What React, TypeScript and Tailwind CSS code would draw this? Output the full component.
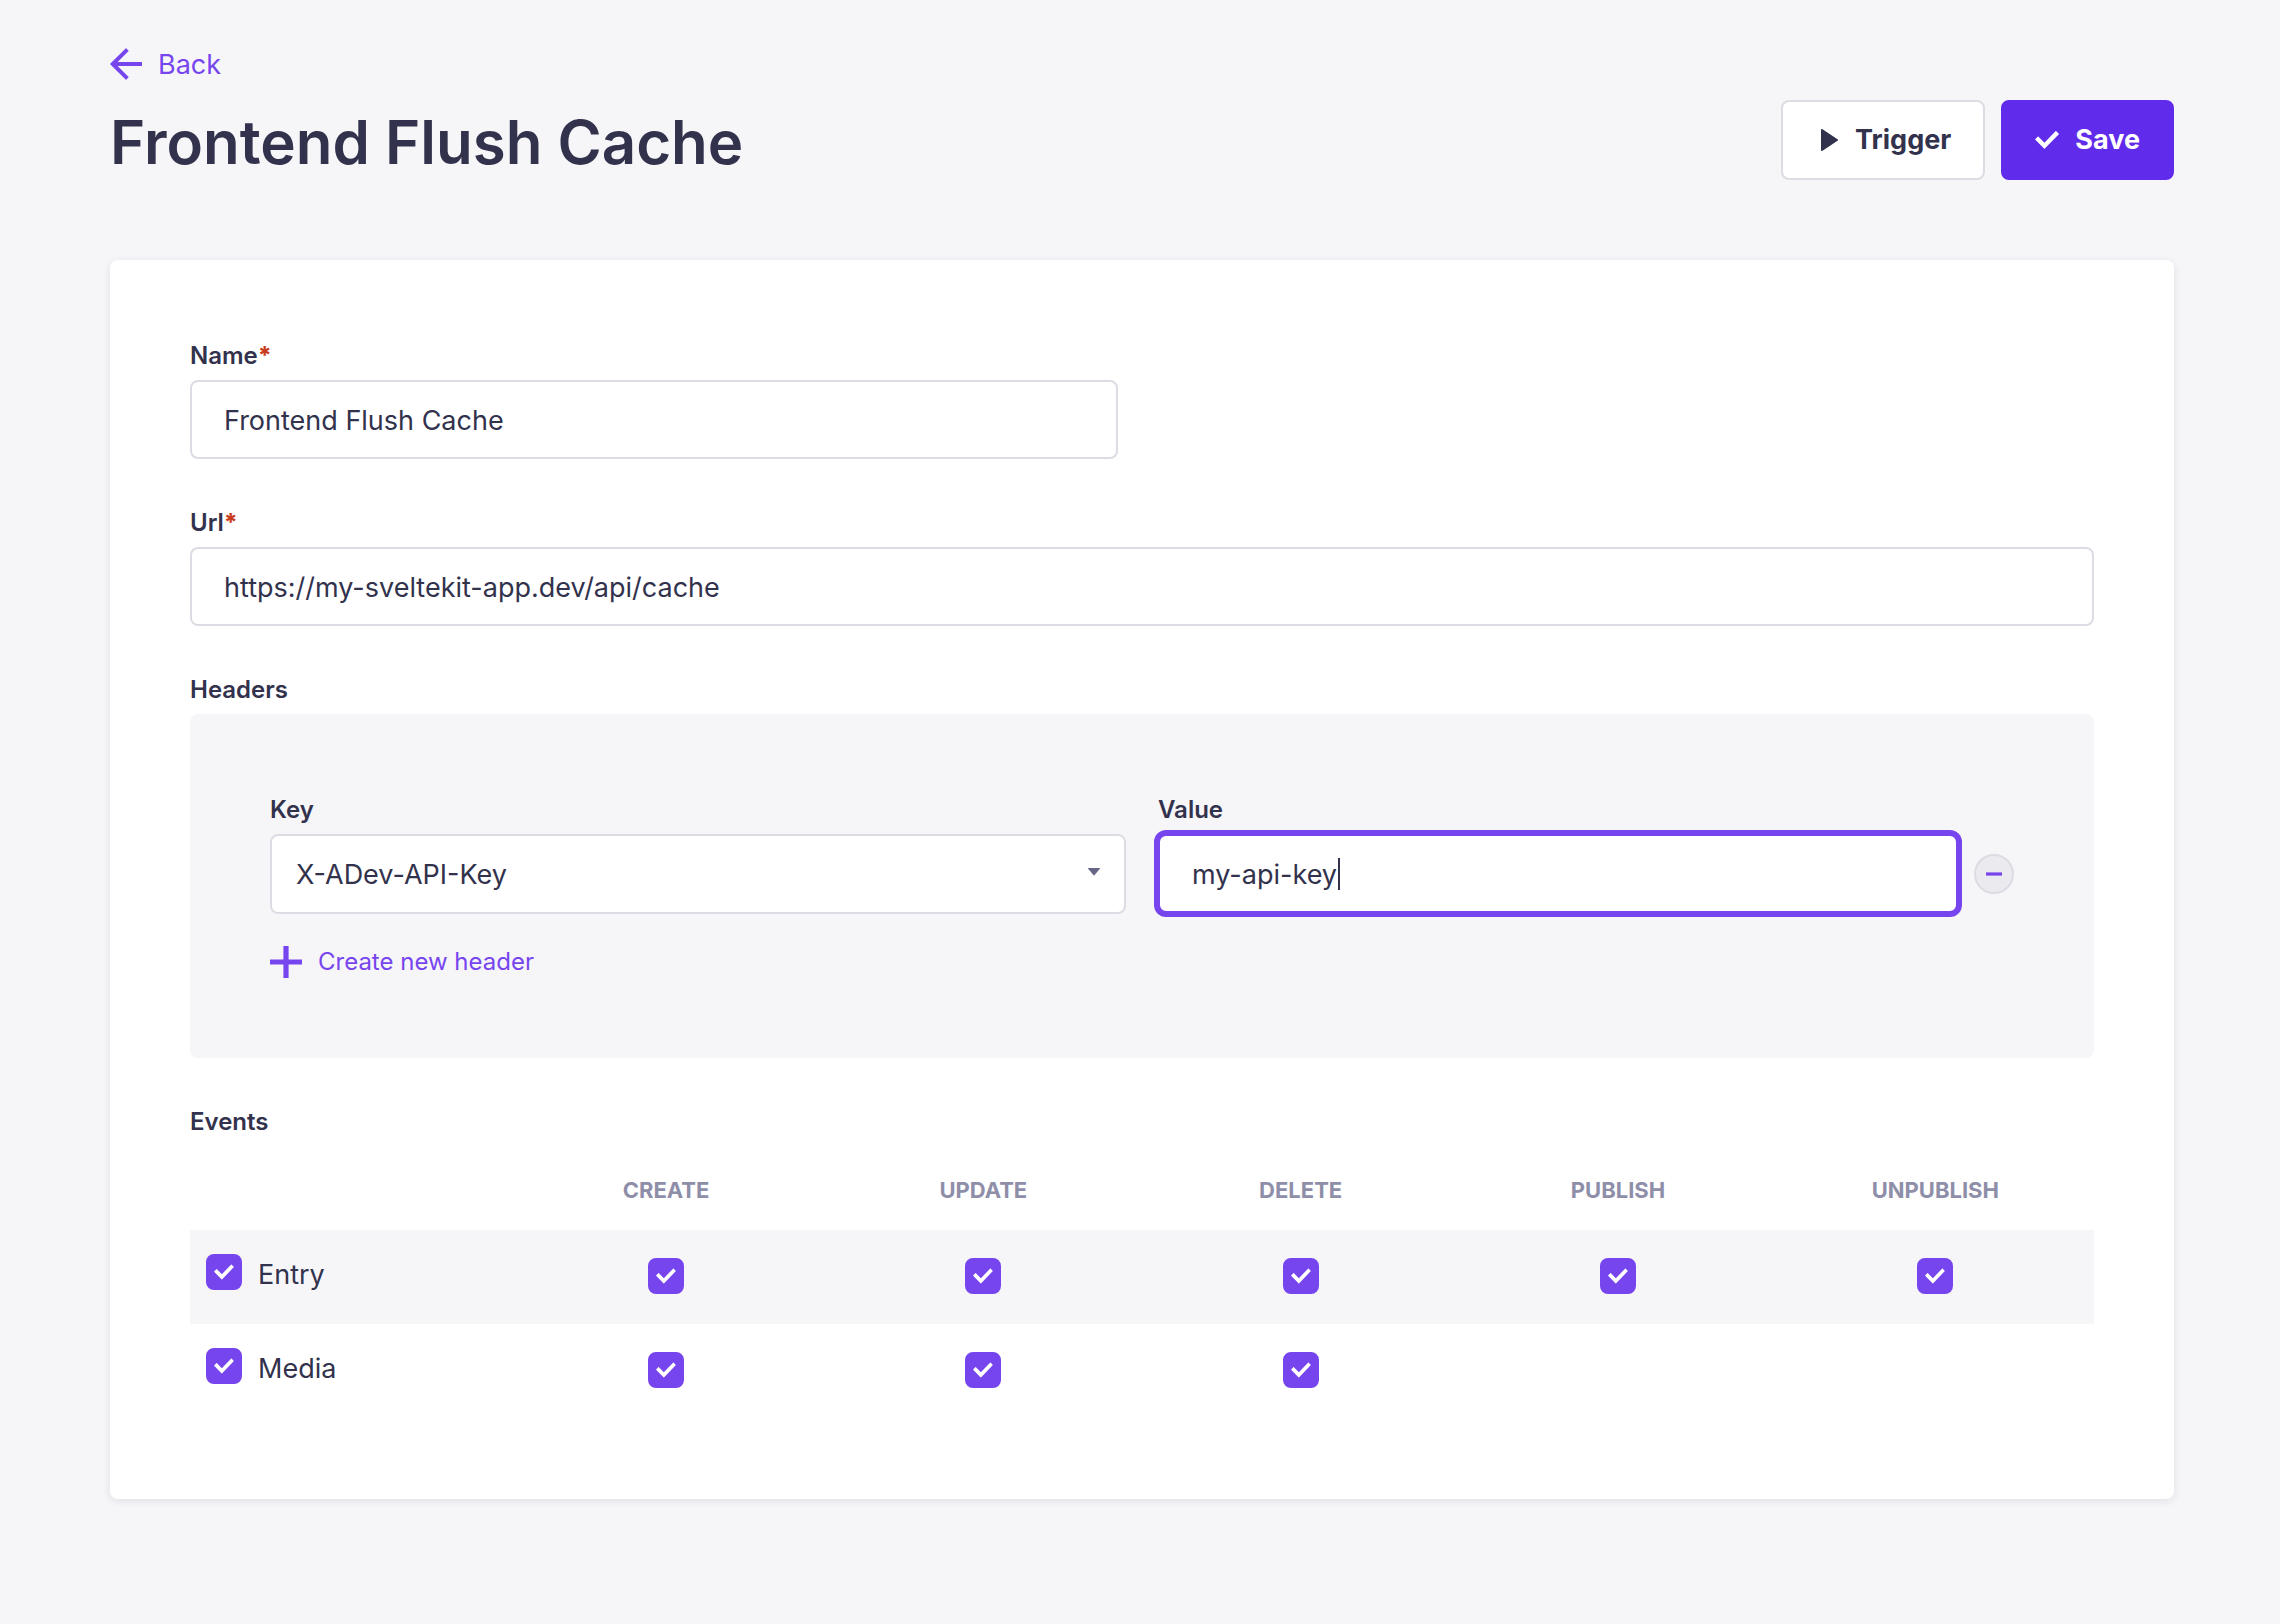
import { useState } from "react";
import type { InputHTMLAttributes, ReactNode } from "react";

const CHECK_PATH =
  "M20.727 2.97a.2.2 0 01.286 0l2.85 2.89a.2.2 0 010 .28L9.554 20.854a.2.2 0 01-.285 0l-9.13-9.243a.2.2 0 010-.281l2.85-2.892a.2.2 0 01.284 0l6.14 6.209L20.726 2.97z";

function CheckIcon({ className }: { className: string }) {
  return (
    <svg viewBox="0 0 24 24" fill="currentColor" aria-hidden="true" className={className}>
      <path d={CHECK_PATH} />
    </svg>
  );
}

function ArrowLeftIcon() {
  return (
    <svg viewBox="0 0 24 24" fill="currentColor" aria-hidden="true" className="size-8">
      <path d="M24 13.3a.2.2 0 01-.2.2H5.74l8.239 8.239a.2.2 0 010 .282L12.14 23.86a.2.2 0 01-.282 0L.14 12.14a.2.2 0 010-.282L11.86.14a.2.2 0 01.282 0L13.98 1.98a.2.2 0 010 .282L5.74 10.5H23.8c.11 0 .2.09.2.2v2.6z" />
    </svg>
  );
}

function PlayIcon() {
  return (
    <svg viewBox="0 0 24 24" fill="currentColor" aria-hidden="true" className="size-6">
      <path d="M6 2c0-.8.8-1.2 1.5-.8l15 10c.7.4.7 1.2 0 1.6l-15 10c-.7.4-1.5 0-1.5-.8z" />
    </svg>
  );
}

function PlusIcon() {
  return (
    <svg viewBox="0 0 32 32" fill="currentColor" aria-hidden="true" className="size-8">
      <path d="M13.4 0h5.2v13.4H32v5.2H18.6V32h-5.2V18.6H0v-5.2h13.4z" />
    </svg>
  );
}

function Label({ htmlFor, required, children }: { htmlFor: string; required?: boolean; children: ReactNode }) {
  return (
    <label htmlFor={htmlFor} className="block text-2xl leading-8 font-semibold">
      {children}
      {required && <span className="font-extrabold text-[#c83c20]">*</span>}
    </label>
  );
}

function TextInput({ className = "border-[#dcdce4]", ...props }: InputHTMLAttributes<HTMLInputElement>) {
  return (
    <input
      type="text"
      className={`h-[79px] w-full rounded-lg border-2 bg-white px-8 pt-0.5 text-[27px] outline-none ${className}`}
      {...props}
    />
  );
}

function Checkbox({ id, label }: { id: string; label?: string }) {
  const [checked, setChecked] = useState(true);
  return (
    <span className="relative inline-block size-9 shrink-0 align-top">
      <input
        id={id}
        type="checkbox"
        aria-label={label}
        checked={checked}
        onChange={(e) => setChecked(e.target.checked)}
        className="block size-9 appearance-none rounded-lg border-2 border-[#c0c0cf] bg-white checked:border-[#7645ee] checked:bg-[#7645ee]"
      />
      {checked && <CheckIcon className="pointer-events-none absolute inset-2 size-5 text-white" />}
    </span>
  );
}

const EVENTS = ["Create", "Update", "Delete", "Publish", "Unpublish"];
const ROWS = [
  { name: "Entry", count: 5, tone: "h-[94px] bg-[#f6f6f9]" },
  { name: "Media", count: 3, tone: "h-[95px] bg-white" },
];

export default function App() {
  const [name, setName] = useState("Frontend Flush Cache");
  const [url, setUrl] = useState("https://my-sveltekit-app.dev/api/cache");
  const [value, setValue] = useState("my-api-key");

  return (
    <div className="min-h-screen bg-[#f6f6f9] pt-12 pr-[106px] pb-[125px] pl-[110px] font-['Inter',sans-serif] text-[#32324d]">
      <header>
        <a href="#back" className="inline-flex h-8 items-center gap-4 align-top text-[27px] text-[#7645ee]">
          <ArrowLeftIcon />
          <span className="pt-0.5">Back</span>
        </a>
        <div className="mt-5 flex h-20 items-center justify-between">
          <h1 className="pt-1 text-6xl leading-20 font-semibold">Frontend Flush Cache</h1>
          <div className="flex gap-4">
            <button
              type="button"
              className="flex h-20 items-center gap-4 rounded-lg border-2 border-[#dcdce4] bg-white px-8 text-[27px] font-bold"
            >
              <PlayIcon />
              Trigger
            </button>
            <button
              type="submit"
              form="webhook"
              className="flex h-20 items-center gap-4 rounded-lg border-2 border-[#612bec] bg-[#612bec] px-8 text-[27px] font-bold text-white"
            >
              <CheckIcon className="size-6" />
              Save
            </button>
          </div>
        </div>
      </header>

      <form
        id="webhook"
        onSubmit={(e) => e.preventDefault()}
        className="mt-20 flex flex-col gap-12 rounded-lg bg-white p-20 shadow-[0_2px_8px_rgba(33,33,52,0.1)]"
      >
        <div className="grid grid-cols-2 gap-12">
          <div className="flex flex-col gap-2">
            <Label htmlFor="name" required>Name</Label>
            <TextInput id="name" value={name} onChange={(e) => setName(e.target.value)} />
          </div>
        </div>

        <div className="flex flex-col gap-2">
          <Label htmlFor="url" required>Url</Label>
          <TextInput id="url" value={url} onChange={(e) => setUrl(e.target.value)} />
        </div>

        <section className="flex flex-col gap-2">
          <h2 className="text-2xl leading-8 font-semibold">Headers</h2>
          <div className="rounded-lg bg-[#f6f6f9] p-20">
            <div className="grid grid-cols-2 gap-8">
              <div className="flex flex-col gap-2">
                <Label htmlFor="header-key">Key</Label>
                <div className="relative">
                  <select
                    id="header-key"
                    className="block h-20 w-full appearance-none rounded-lg border-2 border-[#dcdce4] bg-white px-6 pt-0.5 text-[27px]"
                  >
                    <option>X-ADev-API-Key</option>
                  </select>
                  <svg
                    viewBox="0 0 12 8"
                    fill="#666687"
                    aria-hidden="true"
                    className="pointer-events-none absolute top-[34px] right-[26px] h-2 w-3"
                  >
                    <path d="M.4 0h11.2c.4 0 .5.5.3.8L6.4 7.3a.6.6 0 01-.8 0L.1.8C-.1.5 0 0 .4 0z" />
                  </svg>
                </div>
              </div>
              <div className="flex flex-col gap-2">
                <Label htmlFor="header-value">Value</Label>
                <div className="flex items-center gap-4">
                  <div className="relative flex-1">
                    <TextInput
                      id="header-value"
                      value={value}
                      onChange={(e) => setValue(e.target.value)}
                      className="block border-[#7645ee] ring-4 ring-[#7645ee]"
                    />
                    <span className="absolute top-6 left-[180px] h-8 w-0.5 bg-[#32324d]" />
                  </div>
                  <button
                    type="button"
                    aria-label="Remove header"
                    className="flex size-10 items-center justify-center rounded-full border-2 border-[#dcdce4] bg-[#eaeaef]"
                  >
                    <svg viewBox="0 0 16 4" fill="#7645ee" aria-hidden="true" className="h-1 w-4">
                      <path d="M0 .4h16v3.2H0z" />
                    </svg>
                  </button>
                </div>
              </div>
            </div>
            <button type="button" className="mt-8 flex h-8 items-center gap-4 text-2xl text-[#7645ee]">
              <PlusIcon />
              Create new header
            </button>
          </div>
        </section>

        <section>
          <h2 id="events" className="text-2xl leading-8 font-semibold">Events</h2>
          <table aria-labelledby="events" className="mt-3 w-full table-fixed border-collapse">
            <thead>
              <tr className="h-20">
                <td />
                {EVENTS.map((event) => (
                  <th key={event} scope="col" className="text-[22px] font-bold text-[#8e8ea9] uppercase">
                    {event}
                  </th>
                ))}
              </tr>
            </thead>
            <tbody>
              {ROWS.map((row) => (
                <tr key={row.name} className={row.tone}>
                  <th scope="row" className="px-4 pt-6 text-left align-top text-[27px] font-normal">
                    <div className="flex gap-4">
                      <Checkbox id={row.name} />
                      <label htmlFor={row.name} className="leading-[42px]">{row.name}</label>
                    </div>
                  </th>
                  {EVENTS.map((event, i) => (
                    <td key={event} className="pt-7 text-center align-top">
                      {i < row.count && <Checkbox id={`${row.name}-${event}`} label={`${row.name} ${event}`} />}
                    </td>
                  ))}
                </tr>
              ))}
            </tbody>
          </table>
        </section>
      </form>
    </div>
  );
}
